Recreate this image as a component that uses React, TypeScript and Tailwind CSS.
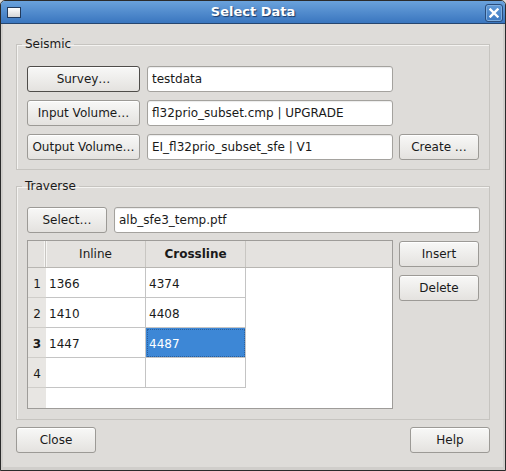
import React from "react";

const font = { fontFamily: '"DejaVu Sans", "Liberation Sans", sans-serif' };

function Button({ label, w, strong }: { label: string; w: string; strong?: boolean }) {
  return (
    <button
      className={`${w} h-[26px] shrink-0 rounded-[3px] border bg-gradient-to-b from-[#f8f8f7] to-[#e4e2df] text-[12px] text-[#1a1a1a] shadow-[inset_0_1px_0_#ffffff] ${
        strong ? "border-[#4f4d4a]" : "border-[#9c9a96]"
      }`}
    >
      {label}
    </button>
  );
}

function Field({ value, w }: { value: string; w: string }) {
  return (
    <div
      className={`${w} h-[26px] rounded-[3px] border border-[#a4a29e] bg-white px-[4px] text-[12px] leading-[24px] text-[#1a1a1a] shadow-[inset_0_1px_1px_rgba(0,0,0,0.08)]`}
    >
      {value}
    </div>
  );
}

function Group({ title, children }: { title: string; children: React.ReactNode }) {
  return (
    <fieldset className="border border-[#c6c4c0] shadow-[inset_1px_1px_0_#f4f3f1] pl-[10px] pr-[9px]">
      <legend className="ml-[-5px] px-[3px] text-[12px] leading-[14px] text-[#1a1a1a]">{title}</legend>
      {children}
    </fieldset>
  );
}

const rows = [
  ["1366", "4374"],
  ["1410", "4408"],
  ["1447", "4487"],
  ["", ""],
];

export default function App() {
  return (
    <div className="w-[506px] h-[471px] bg-[#dedcd9]" style={font}>
      <div className="flex h-full flex-col overflow-hidden rounded-t-[5px] border border-[#2b2b2b]">
        {/* title bar */}
        <div className="relative flex h-[23px] shrink-0 items-center justify-center border-b border-[#26466f] bg-gradient-to-b from-[#6aa2dc] to-[#3a76bf]">
          <div className="absolute left-[6px] top-[6px] h-[11px] w-[14px] border border-[#223a5c] bg-gradient-to-b from-[#ffffff] to-[#d6d6d6]" />
          <span className="text-[13px] font-bold text-white [text-shadow:1px_1px_1px_#1c3a66]">Select Data</span>
          <div className="absolute right-[2px] top-[3px] flex h-[18px] w-[18px] items-center justify-center rounded-[3px] border border-[#2a4d7c] shadow-[inset_0_0_0_1px_#7eaee0]">
            <svg width="10" height="10" viewBox="0 0 10 10">
              <path d="M1.5 1.5 L8.5 8.5 M8.5 1.5 L1.5 8.5" stroke="#ffffff" strokeWidth="2.4" strokeLinecap="square" />
            </svg>
          </div>
        </div>

        {/* body */}
        <div className="flex flex-1 flex-col border-x-2 border-b-[3px] border-[#d0cecb] px-[13px] pt-[13px]">
          <Group title="Seismic">
            <div className="flex flex-col gap-[8px] pt-[15px] pb-[9px]">
              <div className="flex gap-[7px]">
                <Button label="Survey…" w="w-[113px]" strong />
                <Field value="testdata" w="w-[246px]" />
              </div>
              <div className="flex gap-[7px]">
                <Button label="Input Volume…" w="w-[113px]" />
                <Field value="fl32prio_subset.cmp | UPGRADE" w="w-[246px]" />
              </div>
              <div className="flex gap-[7px]">
                <Button label="Output Volume…" w="w-[113px]" />
                <Field value="EI_fl32prio_subset_sfe | V1" w="w-[246px]" />
                <div className="ml-[-1px]">
                  <Button label="Create …" w="w-[80px]" />
                </div>
              </div>
            </div>
          </Group>

          <div className="mt-[9px]">
            <Group title="Traverse">
              <div className="flex flex-col gap-[7px] pt-[14px] pb-[10px]">
                <div className="flex gap-[7px]">
                  <Button label="Select…" w="w-[80px]" />
                  <Field value="alb_sfe3_temp.ptf" w="flex-1" />
                </div>
                <div className="flex gap-[6px]">
                  <div className="flex h-[169px] w-[366px] flex-col border border-[#9e9c99] bg-white">
                    <div className="flex h-[27px] shrink-0 border-b border-[#b8b6b2] bg-[#e4e2df] text-[12px] text-[#1a1a1a]">
                      <div className="w-[18px] border-r border-[#c8c6c2] shadow-[inset_-1px_0_0_#f6f5f3]" />
                      <div className="flex w-[100px] items-center justify-center border-r border-[#c8c6c2] shadow-[inset_1px_0_0_#f6f5f3]">Inline</div>
                      <div className="flex w-[100px] items-center justify-center border-r border-[#c8c6c2] font-bold">Crossline</div>
                      <div className="flex-1" />
                    </div>
                    <div className="flex flex-1">
                      <div className="flex w-[18px] flex-col bg-[#e8e6e3]">
                        {rows.map((_, i) => (
                          <div
                            key={i}
                            className={`flex h-[30px] items-center justify-center border-b border-[#cfcdc9] pt-[2px] text-[12px] text-[#1a1a1a] ${
                              i === 2 ? "font-bold" : ""
                            }`}
                          >
                            {i + 1}
                          </div>
                        ))}
                      </div>
                      <div className="flex flex-col">
                        {rows.map((r, i) => (
                          <div key={i} className="flex h-[30px]">
                            <div className="w-[100px] border-r border-b border-[#c4c4c4] pl-[3px] pt-[2px] text-[12px] leading-[28px] text-[#1a1a1a]">
                              {r[0]}
                            </div>
                            <div
                              className={`w-[100px] border-r border-b border-[#c4c4c4] pl-[3px] pt-[2px] text-[12px] leading-[28px] ${
                                i === 2 ? "bg-[#3d87d6] text-white outline-1 outline-dotted outline-offset-[-2px] outline-[#2a5f9c]" : "text-[#1a1a1a]"
                              }`}
                            >
                              {r[1]}
                            </div>
                          </div>
                        ))}
                      </div>
                    </div>
                  </div>
                  <div className="flex flex-col gap-[8px] pt-[1px]">
                    <Button label="Insert" w="w-[80px]" />
                    <Button label="Delete" w="w-[80px]" />
                  </div>
                </div>
              </div>
            </Group>
          </div>

          <div className="mt-[7px] flex justify-between">
            <Button label="Close" w="w-[80px]" />
            <Button label="Help" w="w-[80px]" />
          </div>
        </div>
      </div>
    </div>
  );
}
